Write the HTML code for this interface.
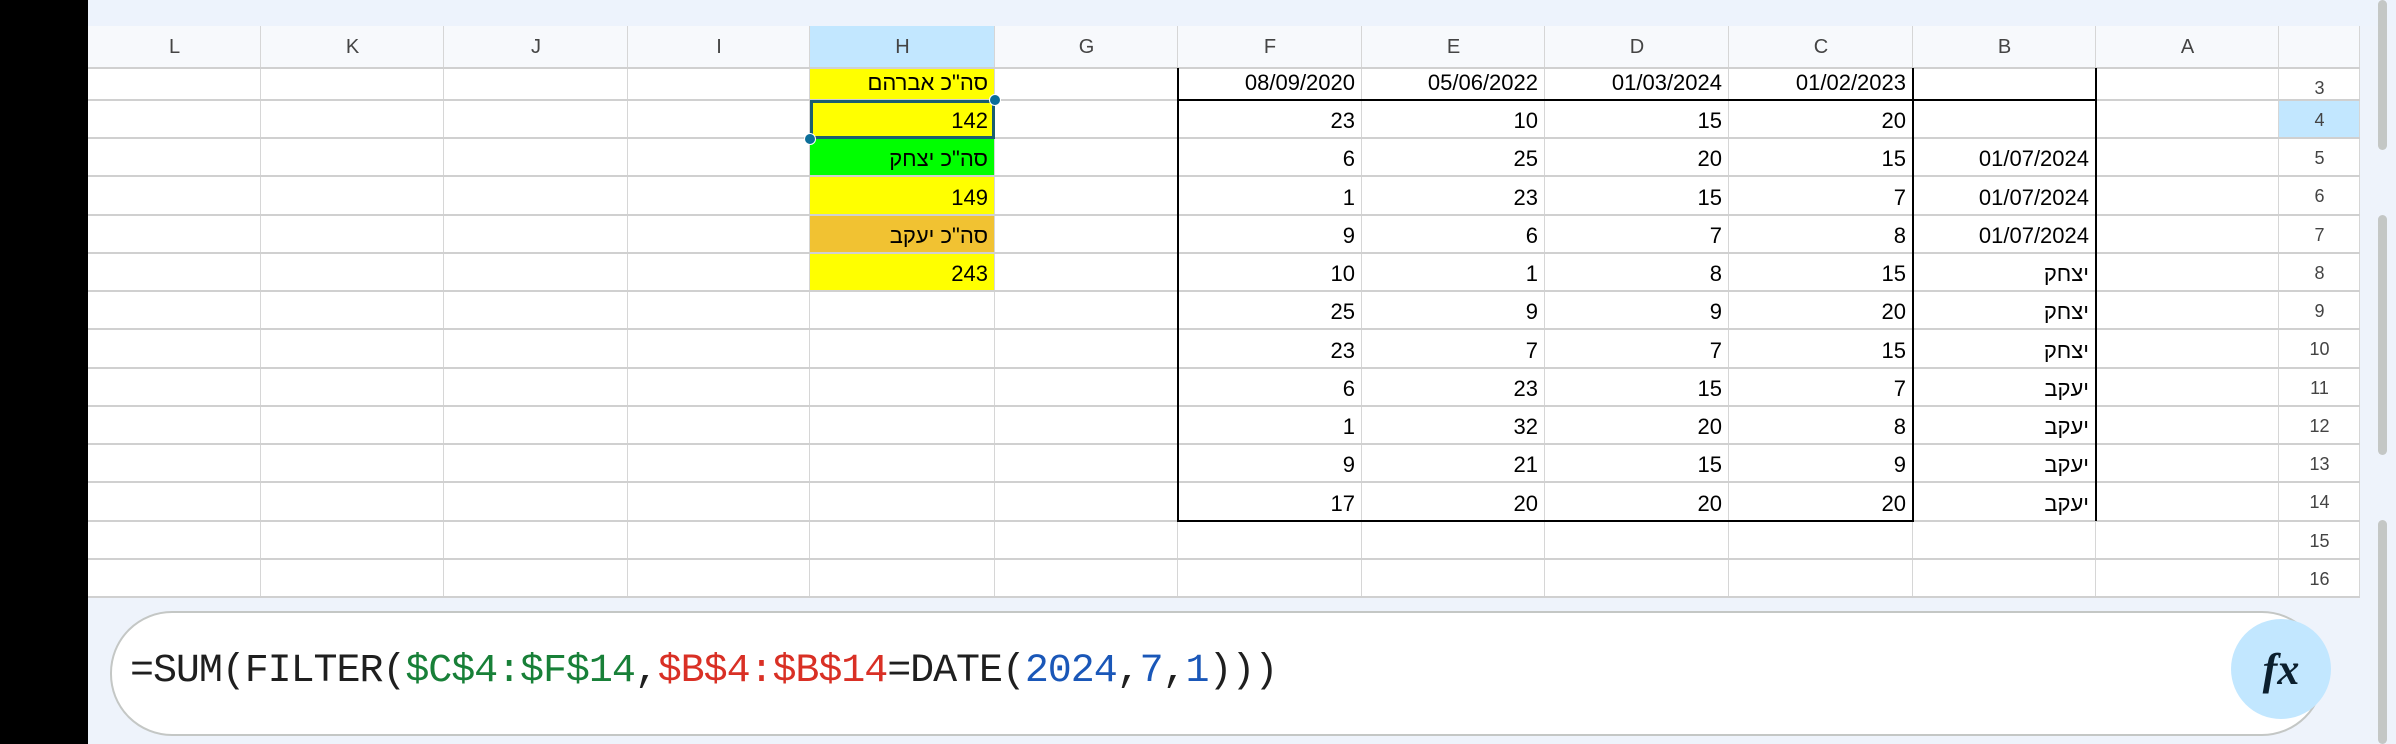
<!DOCTYPE html>
<html><head><meta charset="utf-8"><style>
*{margin:0;padding:0;box-sizing:border-box}
body{width:2396px;height:744px;overflow:hidden;background:#eef3fb;position:relative;font-family:"Liberation Sans",sans-serif}
.a{position:absolute}
.c{position:absolute;display:flex;align-items:flex-end;justify-content:flex-end;padding:0 7px 4px 0;font-size:22px;color:#000;font-family:"Liberation Sans","Noto Sans CJK JP",sans-serif;line-height:26px}
.h{position:absolute;display:flex;align-items:center;justify-content:center;color:#444;font-size:20px}
</style></head><body>
<div class="a" style="left:0;top:0;width:88px;height:744px;background:#000"></div>
<div class="a" style="left:88px;top:0;width:2308px;height:26px;background:#edf3fc"></div>
<div class="a" style="left:88px;top:26px;width:2272px;height:42px;background:#f7f9fc"></div>
<div class="a" style="left:88px;top:68px;width:2272px;height:529px;background:#fff"></div>
<div id="g"></div>
<div class="a" style="left:110px;top:611px;width:2214px;height:125px;background:#fff;border:2px solid #c4c7c5;border-radius:62px"></div>
<div class="a" style="left:130px;top:642px;font-family:'Liberation Mono',monospace;font-size:40px;letter-spacing:-1.06px;line-height:60px;color:#1f1f1f;white-space:pre">=SUM(FILTER(<span style="color:#188038">$C$4:$F$14</span>,<span style="color:#d93025">$B$4:$B$14</span>=DATE(<span style="color:#1a57b8">2024</span>,<span style="color:#1a57b8">7</span>,<span style="color:#1a57b8">1</span>)))</div>
<div class="a" style="left:2231px;top:619px;width:100px;height:100px;border-radius:50%;background:#c2e7ff;display:flex;align-items:center;justify-content:center;font:italic bold 44px 'Liberation Serif',serif;color:#0b1f2e">fx</div>
<div class="a" style="left:2378px;top:0;width:9px;height:150px;background:#c4c7c5;border-radius:5px"></div>
<div class="a" style="left:2378px;top:215px;width:9px;height:240px;background:#c4c7c5;border-radius:5px"></div>
<div class="a" style="left:2378px;top:520px;width:9px;height:224px;background:#c4c7c5;border-radius:5px"></div>
<script>
var X=[88,261,444,628,810,995,1178,1362,1545,1729,1913,2096,2279,2360];
var L=['L','K','J','I','H','G','F','E','D','C','B','A'];
var R=[68];for(var i=0;i<=13;i++)R.push(100+i*38.23);
var s='';
function d(l,t,w,h,st){s+='<div class="a" style="left:'+l+'px;top:'+t+'px;width:'+w+'px;height:'+h+'px;'+st+'"></div>';}
// fills
var fills={4:['#ffff00',0],5:['#ffff00',1],6:['#00ff00',2],7:['#ffff00',3],8:['#f1c232',4],9:['#ffff00',5]};
[[3,'#ffff00'],[4,'#ffff00'],[5,'#00ff00'],[6,'#ffff00'],[7,'#f1c232'],[8,'#ffff00']].forEach(function(f){var r=f[0]-3;d(810,R[r],185,R[r+1]-R[r],'background:'+f[1]);});
d(810,26,185,42,'background:#c2e7ff');
d(2279,R[1],81,R[2]-R[1],'background:#c2e7ff');
// headers
for(var i=0;i<12;i++)s+='<div class="h" style="left:'+X[i]+'px;top:26px;width:'+(X[i+1]-X[i])+'px;height:42px">'+L[i]+'</div>';
for(var r=0;r<14;r++)s+='<div class="h" style="left:2279px;top:'+(R[r]+2)+'px;width:81px;height:'+(R[r+1]-R[r])+'px;font-size:18px;align-items:flex-start;padding-top:8px">'+(r+3)+'</div>';
// grid lines
for(var i=1;i<X.length-1;i++)d(X[i]-1,26,1,571,'background:#d6d6d6');
d(2359,26,1,571,'background:#d6d6d6');
for(var r=0;r<R.length;r++)d(88,R[r]-1,2272,2,'background:#d0d0d0');
// data
var data=[
['סה"כ אברהם','','08/09/2020','05/06/2022','01/03/2024','01/02/2023',''],
['142','',23,10,15,20,''],
['סה"כ יצחק','',6,25,20,15,'01/07/2024'],
['149','',1,23,15,7,'01/07/2024'],
['סה"כ יעקב','',9,6,7,8,'01/07/2024'],
['243','',10,1,8,15,'יצחק'],
['','',25,9,9,20,'יצחק'],
['','',23,7,7,15,'יצחק'],
['','',6,23,15,7,'יעקב'],
['','',1,32,20,8,'יעקב'],
['','',9,21,15,9,'יעקב'],
['','',17,20,20,20,'יעקב']];
for(var r=0;r<data.length;r++)for(var c=0;c<7;c++){var v=data[r][c];if(v==='')continue;var ci=4+c;
s+='<div class="c" style="left:'+X[ci]+'px;top:'+R[r]+'px;width:'+(X[ci+1]-X[ci])+'px;height:'+(R[r+1]-R[r])+'px">'+v+'</div>';}
// black borders
d(1177,68,2,453,'background:#000');d(1912,68,2,453,'background:#000');d(2095,68,2,453,'background:#000');
d(1177,99,920,2,'background:#000');d(1177,520,737,2,'background:#000');
// selection
d(810,100,185,39,'border:3px solid #1b5e70');
d(989,94,12,12,'background:#0b6e99;border-radius:50%;border:1px solid #fff');
d(804,133,12,12,'background:#0b6e99;border-radius:50%;border:1px solid #fff');
document.getElementById('g').innerHTML=s;
</script>
</body></html>
